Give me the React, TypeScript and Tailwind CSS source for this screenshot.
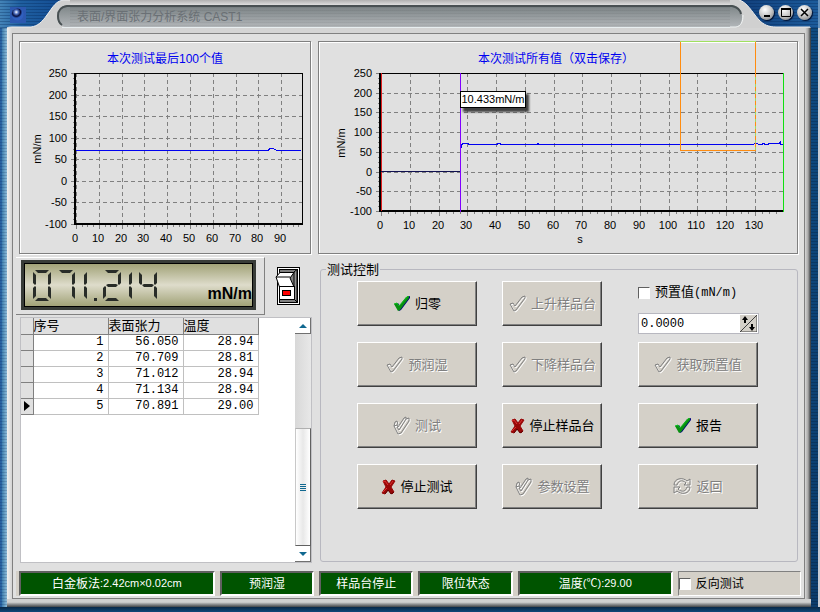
import { useState } from "react";
import type { ReactNode } from "react";
import clsx from "clsx";

const yLabels = [250, 200, 150, 100, 50, 0, -50, -100];

const rows = [
  { no: 1, tension: "56.050", temp: "28.94" },
  { no: 2, tension: "70.709", temp: "28.81" },
  { no: 3, tension: "71.012", temp: "28.94" },
  { no: 4, tension: "71.134", temp: "28.94" },
  { no: 5, tension: "70.891", temp: "29.00" },
];

// segments: a top, b right top, c right bottom, d bottom, e left bottom, f left top, g middle
const digits = [
  { x: 8, on: "abcdef" },
  { x: 32, on: "abc" },
  { x: 44, on: "bc" },
  { x: 78, on: "abdeg" },
  { x: 89, on: "bc" },
  { x: 114, on: "bcfg" },
];

const segments: Record<string, string> = {
  a: "M2 0H16L13 3H5Z",
  b: "M18 2V13L16 15L15 14V5Z",
  c: "M18 29V18L16 16L15 17V26Z",
  d: "M2 31H16L13 28H5Z",
  e: "M0 29V18L2 16L3 17V26Z",
  f: "M0 2V13L2 15L3 14V5Z",
  g: "M5 14H13L15 15L13 17H5L3 15Z",
};

type AxesProps = {
  left: number;
  right: number;
  top: number;
  bottom: number;
  stepX: number;
  count: number;
};

function Axes({ left, right, top, bottom, stepX, count }: AxesProps) {
  const zero = left + 1;
  const stepY = (bottom - top) / 7;
  const ticks = Array.from({ length: count }, (_, i) => i);
  const minorX = Array.from({ length: count * 4 }, (_, i) => Math.round(zero + (i * stepX) / 4)).filter((x) => x < right);
  const minorY = Array.from({ length: 28 }, (_, i) => Math.round(top + (i * stepY) / 4));
  return (
    <g>
      <g stroke="#808080" shapeRendering="crispEdges">
        {ticks.map((i) => (
          <line key={i} x1={Math.round(zero + i * stepX) + 0.5} x2={Math.round(zero + i * stepX) + 0.5} y1={top} y2={bottom} strokeDasharray="4 3" />
        ))}
        {yLabels.map((v, i) => (
          <line key={v} x1={left} x2={right} y1={Math.round(top + i * stepY) + 0.5} y2={Math.round(top + i * stepY) + 0.5} strokeDasharray="4 3" />
        ))}
        {minorX.map((x, i) => (
          <line key={i} x1={x + 0.5} x2={x + 0.5} y1={bottom} y2={bottom + (i % 4 ? 3 : 5)} />
        ))}
        {minorY.map((y, i) => (
          <line key={i} x1={left - (i % 4 ? 2 : 4)} x2={left} y1={y + 0.5} y2={y + 0.5} />
        ))}
        <line x1={left - 4} x2={left} y1={bottom + 0.5} y2={bottom + 0.5} />
      </g>
      <g fill="#000" shapeRendering="crispEdges">
        <rect x={left - 1} y={top} width="2" height={bottom - top} />
        <rect x={left - 1} y={bottom - 1} width={right - left + 2} height="2" />
        <rect x={left} y={top} width={right - left} height="1" />
      </g>
      <g fontSize="11" fill="#000">
        {yLabels.map((v, i) => (
          <text key={v} x={left - 8} y={Math.round(top + i * stepY) + 4} textAnchor="end">{v}</text>
        ))}
        {ticks.map((i) => (
          <text key={i} x={Math.round(zero + i * stepX) - 1} y={bottom + 18} textAnchor="middle">{i * 10}</text>
        ))}
      </g>
    </g>
  );
}

function Panel({ children }: { children: ReactNode }) {
  return (
    <div className="border border-[#808080] shadow-[inset_1px_1px_0_#fff,1px_1px_0_#fff]">{children}</div>
  );
}

function LastChart() {
  return (
    <Panel>
      <svg viewBox="0 0 290 211" className="block w-full" role="img" aria-label="本次测试最后100个值">
        <text x="145" y="21" fontSize="12" fill="#0000f0" textAnchor="middle">本次测试最后100个值</text>
        <text transform="translate(21 107) rotate(-90)" fontSize="11" textAnchor="middle">mN/m</text>
        <Axes left={55} right={282} top={31} bottom={182} stepX={22.8} count={10} />
        <rect x="282" y="31" width="1" height="152" fill="#000" />
        <polyline points="56,108.5 248,108.5 250,106.5 253,106.5 255,107.5 257,108.5 281,108.5" fill="none" stroke="#0000f0" shapeRendering="crispEdges" />
      </svg>
    </Panel>
  );
}

function AllChart() {
  return (
    <Panel>
      <svg viewBox="0 0 478 211" className="block w-full overflow-visible" role="img" aria-label="本次测试所有值">
        <text x="237" y="21" fontSize="12" fill="#0000f0" textAnchor="middle">本次测试所有值（双击保存）</text>
        <text transform="translate(26 101) rotate(-90)" fontSize="11" textAnchor="middle">mN/m</text>
        <text x="261" y="201" fontSize="11" textAnchor="middle">s</text>
        <Axes left={61} right={464} top={31} bottom={169} stepX={28.76} count={14} />
        <g fill="none" shapeRendering="crispEdges">
          <path d="M62.5 31V169" stroke="#e02020" />
          <path d="M464.5 31V170" stroke="#10e010" />
          <path d="M62 129.5H141" stroke="#101050" />
          <path d="M142.5 106V102.5H143V101.5H149V102.5H178V101.5H181V102.5H218V101.5H219V102.5H434L436 101.5H438L440 102.5H443V101.5H445V102.5H449V101.5H460L461 100.5V102.5H464" stroke="#0000f0" />
          <path d="M361.5 0V108.5H436.5" stroke="#ff8c10" />
          <path d="M436.5 0V31" stroke="#ff8c10" />
          <path d="M436.5 31V108" stroke="#a0d860" />
          <path d="M436.5 31V108" stroke="#ff8c10" strokeDasharray="4 3" />
          <path d="M361 -0.5H437" stroke="#a0e060" />
          <path d="M141.5 31V170" stroke="#8000ff" />
        </g>
        <rect x="144" y="52" width="66" height="18" fill="#404040" className="blur-[1px]" />
        <rect x="141.5" y="49.5" width="65" height="16" fill="#fff" stroke="#000" />
        <text x="174" y="61" fontSize="11" textAnchor="middle">10.433mN/m</text>
      </svg>
    </Panel>
  );
}

function TitleBar() {
  return (
    <header className="flex h-7 w-full bg-[#d0d0d0]">
      <svg width="70" height="28" viewBox="0 0 70 28" className="shrink-0" aria-hidden="true">
        <defs>
          <linearGradient id="blueL">
            <stop offset="0" stopColor="#4484b8" />
            <stop offset="0.3" stopColor="#1f5fa0" />
            <stop offset="1" stopColor="#104890" />
          </linearGradient>
          <linearGradient id="groove" x2="0" y2="1">
            <stop offset="0" stopColor="#7c8486" />
            <stop offset="1" stopColor="#b2b6b9" />
          </linearGradient>
          <pattern id="lines" width="4" height="3" patternUnits="userSpaceOnUse">
            <rect width="4" height="1" fill="#002050" fillOpacity="0.3" />
          </pattern>
          <radialGradient id="ball" cx="0.4" cy="0.3">
            <stop offset="0" stopColor="#fff" />
            <stop offset="0.35" stopColor="#5070c0" />
            <stop offset="0.7" stopColor="#081040" />
            <stop offset="1" stopColor="#3060c0" />
          </radialGradient>
        </defs>
        <rect width="70" height="28" fill="url(#blueL)" />
        <rect width="70" height="28" fill="url(#lines)" />
        <rect x="10" y="7" width="16" height="16" fill="#2c58b0" />
        <circle cx="17.500" cy="14.500" r="6" fill="url(#ball)" />
        <path d="M7 28Q8 27 12 27H31C38 26 42 22 47 15C53 7 56 0 65 0H70V28Z" fill="#d0d0d0" />
        <path d="M7 28Q8 27 12 27H31C38 26 42 22 47 15C53 7 56 0 65 0H70" fill="none" stroke="#f0f0f0" />
        <path d="M70 5H67C60 6 57 12 57 16C57 22 60 26 65 27H70Z" fill="url(#groove)" />
        <path d="M70 6H67C60 7 58 12 58 16C58 21 59 23 62 25" fill="none" stroke="#485052" strokeWidth="2" />
        <path d="M62 27H70" stroke="#e8eef0" transform="translate(0 0.500)" />
      </svg>
      <div className="flex min-w-0 flex-1 flex-col">
        <div className="h-[5px] bg-linear-to-b from-[#b0b0b0] to-[#dedede]" />
        <div className="flex h-[22px] items-center border-t-2 border-[#485052] bg-[repeating-linear-gradient(#0000000c_0_1px,transparent_1px_3px),linear-gradient(#7c8486,#b2b6b9)] pl-[7px]">
          <h1 className="text-xs text-[#6a7075]">表面/界面张力分析系统 CAST1</h1>
        </div>
        <div className="h-px bg-[#e8eef0]" />
      </div>
      <div className="relative h-7 w-[90px] shrink-0">
        <svg width="90" height="28" viewBox="0 0 90 28" className="absolute inset-0" aria-hidden="true">
          <defs>
            <linearGradient id="blueR">
              <stop offset="0" stopColor="#103c78" />
              <stop offset="1" stopColor="#1c5c9c" />
            </linearGradient>
          </defs>
          <rect width="90" height="28" fill="url(#blueR)" />
          <rect width="90" height="28" fill="url(#lines)" />
          <path d="M0 0H9C17 2 22 12 29 20C34 25 39 27 46 27H77Q81 27 81 28H0Z" fill="#d0d0d0" />
          <path d="M9 0C17 2 22 12 29 20C34 25 39 27 46 27H80" fill="none" stroke="#ececec" />
          <path d="M0 5H2C9 6 12 12 12 17C12 23 10 26 6 27H0Z" fill="url(#groove)" />
          <path d="M0 6H2C7 7 10 9 11 14" fill="none" stroke="#485052" strokeWidth="2" />
          <path d="M13 15C13 22 11 26 6 27H0" fill="none" stroke="#f0f4f4" />
          <rect x="88" width="2" height="28" fill="#6a96c0" />
        </svg>
        <div className="relative flex h-full justify-end gap-1 pt-[5px] pr-2">
          <WindowButton label="最小化"><path d="M5 11H11" /></WindowButton>
          <WindowButton label="最大化"><path d="M3 4H13M3.500 4V11.500H12.500V4" strokeWidth="1" /><path d="M3 4H13" /></WindowButton>
          <WindowButton label="关闭"><path d="M4 4L11 11M11 4L4 11" strokeWidth="1.500" /></WindowButton>
        </div>
      </div>
    </header>
  );
}

function WindowButton({ label, children }: { label: string; children: ReactNode }) {
  return (
    <button type="button" aria-label={label} className="size-[15px] rounded-full bg-[radial-gradient(circle_at_40%_30%,#fff,#c4c4c4_50%,#707070)] shadow-[1px_1px_1px_#001030]">
      <svg viewBox="0 0 15 15" className="size-[15px]" fill="none" stroke="#000" strokeWidth="2">{children}</svg>
    </button>
  );
}

type IconName = "check" | "double" | "cross" | "back";

const CHECK = "M1 9L4 8L6 11L13 2L16 1L16 3L7 15L5 16Z";

function Icon({ name, disabled }: { name: IconName; disabled?: boolean }) {
  if (name === "cross") {
    return (
      <svg width="15" height="16" viewBox="0 0 15 16" className="shrink-0">
        <path d="M2 2L5 1L8 5L11 1L14 2L10 8L13 13L11 15L7 11L4 15L1 14L5 8Z" fill="#980808" stroke="#980808" />
        <path d="M2 3L4 2L7 6M9 6L12 2M2 13L6 9" stroke="#e03030" fill="none" />
        <path d="M4 15L7 11L10 15L13 13" stroke="#600000" fill="none" />
      </svg>
    );
  }
  if (name === "back") {
    const arrows = "M1 8C1 1 10 0 14 4L17 2V8H11L13 6C9 2 5 4 4 8ZM17 10C17 17 8 18 4 14L1 16V10H7L5 12C9 16 13 14 14 10Z";
    return (
      <svg width="19" height="19" viewBox="0 0 19 19" className="shrink-0" fill="none">
        <path d={arrows} stroke="#fff" transform="translate(1 1)" />
        <path d={arrows} stroke="#808080" />
      </svg>
    );
  }
  if (!disabled) {
    return (
      <svg width="18" height="17" viewBox="0 0 18 17" className="shrink-0">
        <path d={CHECK} fill="#000080" transform="translate(1 0)" />
        <path d={CHECK} fill="#089010" />
        <path d="M1 9L4 8L6 11L15 1" fill="none" stroke="#10c020" />
      </svg>
    );
  }
  const outline = name === "double" ? "M1 10L4 9L5 11L11 2L13 1V3L16 2V5L8 17L5 18ZM1 10L2 6L4 5L5 9M13 3L6 14L4 11" : CHECK;
  return (
    <svg width="18" height={name === "double" ? 20 : 18} viewBox={name === "double" ? "0 0 18 20" : "0 0 18 18"} className="shrink-0" fill="none">
      <path d={outline} stroke="#fff" transform="translate(1 1)" />
      <path d={outline} stroke="#808080" />
    </svg>
  );
}

type ControlProps = { icon: IconName; text: string; disabled?: boolean; narrow?: boolean };

function Control({ icon, text, disabled, narrow }: ControlProps) {
  return (
    <button
      type="button"
      disabled={disabled}
      className={clsx(
        "flex h-[45px] items-center justify-center gap-1 border-t border-l border-r-[#404040] border-b-[#404040] border-t-white border-l-white border-r border-b bg-[#d4d0c8] text-[13px] shadow-[inset_-1px_-1px_0_#808080]",
        narrow ? "w-[100px]" : "w-[120px]",
        disabled ? "text-[#808080] [text-shadow:1px_1px_0_#fff]" : "text-black"
      )}
    >
      <Icon name={icon} disabled={disabled} />
      <span>{text}</span>
    </button>
  );
}

function Lcd() {
  return (
    <div className="flex h-[58px] w-[249px] border-t border-r border-b border-t-white border-r-[#808080] border-b-[#808080] py-0.5 pl-[5px]">
      <div className="flex h-[50px] w-[235px] border-[3px] border-[#383c38]">
        <div className="flex flex-1 items-end justify-between border border-black bg-linear-to-b from-[#a2a378] via-[#dedccb] to-[#a2a378]">
          <svg width="140" height="42" viewBox="0 0 140 42" role="img" aria-label="071.214">
            {digits.map((d) => (
              <g key={d.x} transform={`translate(${d.x} 6)`} fill="#282c28">
                {d.on.split("").map((s) => <path key={s} d={segments[s]} />)}
              </g>
            ))}
            <rect x="69" y="34" width="3" height="3" fill="#282c28" />
          </svg>
          <span className="pb-0.5 text-base leading-5 font-bold">mN/m</span>
        </div>
      </div>
    </div>
  );
}

function PowerSwitch() {
  return (
    <button type="button" aria-label="电源" className="h-10 w-[26px]">
      <svg width="26" height="40" viewBox="0 0 26 40">
        <rect x="2.500" y="1.500" width="22" height="37" fill="#fff" stroke="#000" />
        <rect x="4.500" y="3.500" width="18" height="33" fill="#808080" stroke="#000" />
        <path d="M19 6L22 3.500V36L19 33Z" fill="#909090" stroke="#000" />
        <path d="M5 6.500H19L15 12L19 21H4.500L1 11Z" fill="#fff" stroke="#000" />
        <path d="M1 11H15" fill="none" stroke="#000" />
        <rect x="4.500" y="20.500" width="15" height="13" fill="#fff" stroke="#000" />
        <rect x="7.500" y="24.500" width="8" height="5" fill="#f00" stroke="#000" />
      </svg>
    </button>
  );
}

function DataTable() {
  return (
    <div className="ml-1 mt-0.5 flex h-[246px] w-[292px] border border-[#c0c0c4] bg-white">
      <div className="flex-1">
        <table className="w-[237px] table-fixed border-collapse text-[13px] leading-[15px]">
          <colgroup>
            <col className="w-3" />
            <col className="w-[75px]" />
            <col className="w-[75px]" />
            <col className="w-[75px]" />
          </colgroup>
          <thead>
            <tr className="bg-[#e0e0e0]">
              <th className="h-4 border-r border-b border-[#808080] p-0" />
              <th className="h-4 border-r border-b border-[#808080] p-0 text-left font-normal">序号</th>
              <th className="h-4 border-r border-b border-[#808080] p-0 text-left font-normal">表面张力</th>
              <th className="h-4 border-r border-b border-[#808080] p-0 text-left font-normal">温度</th>
            </tr>
          </thead>
          <tbody className="font-['Liberation_Mono','Noto_Sans_CJK_SC',monospace] text-xs leading-[15px]">
            {rows.map((r) => (
              <tr key={r.no}>
                <td className="h-4 border-r border-b border-[#808080] bg-[#e0e0e0] p-0">
                  {r.no === 5 && (
                    <svg width="10" height="12" viewBox="0 0 10 12" className="block"><path d="M3 1V11L9 6Z" /></svg>
                  )}
                </td>
                <td className="h-4 border-r border-b border-[#c0c0c0] p-0 pr-1 text-right">{r.no}</td>
                <td className="h-4 border-r border-b border-[#c0c0c0] p-0 pr-1 text-right">{r.tension}</td>
                <td className="h-4 border-r border-b border-[#c0c0c0] p-0 pr-1 text-right">{r.temp}</td>
              </tr>
            ))}
          </tbody>
        </table>
      </div>
      <div className="flex w-4 flex-col bg-linear-to-r from-[#d8d8d8] to-[#e8e8e8]">
        <button type="button" aria-label="向上" className="flex h-4 items-center justify-center border-r border-b border-[#707070] bg-white">
          <svg width="8" height="4" viewBox="0 0 8 4"><path d="M0 4L4 0L8 4Z" fill="#106890" /></svg>
        </button>
        <div className="h-[94px]" />
        <div className="flex flex-1 flex-col items-center justify-center gap-px border-t border-r border-b border-l border-t-[#b0b0b0] border-r-[#606060] border-b-[#606060] border-l-[#c8c8c8] bg-linear-to-r from-white via-[#e8e8e8] to-white">
          <span className="h-px w-1.5 bg-[#106890]" />
          <span className="h-px w-1.5 bg-[#106890]" />
          <span className="h-px w-1.5 bg-[#106890]" />
          <span className="h-px w-1.5 bg-[#106890]" />
        </div>
        <button type="button" aria-label="向下" className="flex h-4 items-center justify-center border-r border-b border-[#707070] bg-white">
          <svg width="8" height="4" viewBox="0 0 8 4"><path d="M0 0L4 4L8 0Z" fill="#106890" /></svg>
        </button>
      </div>
    </div>
  );
}

const checkbox = "size-3 appearance-none border border-t-[#606060] border-l-[#606060] border-r-white border-b-white bg-white checked:bg-[#404040]";

function Preset() {
  const [value, setValue] = useState("0.0000");
  return (
    <div className="pt-1 font-['Liberation_Mono','Noto_Sans_CJK_SC',monospace]">
      <div className="flex h-4 items-center gap-[5px]">
        <input id="preset" type="checkbox" className={checkbox} />
        <label htmlFor="preset" className="text-xs leading-4 whitespace-nowrap"><span className="text-[13px]">预置值</span>(mN/m)</label>
      </div>
      <div className="mt-3 flex h-[21px] w-[121px] items-center border border-[#b8b8c0] bg-white pr-px">
        <input aria-label="预置值" value={value} onChange={(e) => setValue(e.target.value)} className="h-full min-w-0 flex-1 bg-white pl-0.5 text-xs outline-none" />
        <button type="button" aria-label="调整">
          <svg width="17" height="17" viewBox="0 0 17 17" className="block">
            <path d="M0 0H17V17H0Z" fill="#d4d0c8" />
            <path d="M0 17H17V0M0 17L17 0" fill="none" stroke="#404040" />
            <path d="M5 1L8 5H6V8H4V5H2Z" />
            <path d="M12 16L15 12H13V9H11V12H9Z" />
          </svg>
        </button>
      </div>
    </div>
  );
}

function Controls() {
  return (
    <fieldset className="mt-[5px] h-[300px] min-w-0 flex-1 rounded-[3px] border border-[#b8b8c0]">
      <legend className="ml-[5px] px-px text-[13px] leading-[15px]">测试控制</legend>
      <div className="grid auto-rows-[61px] grid-cols-[146fr_136fr_120fr] items-start pt-1 pr-[38px] pl-9">
        <Control icon="check" text="归零" />
        <Control icon="check" text="上升样品台" disabled narrow />
        <Preset />
        <Control icon="check" text="预润湿" disabled />
        <Control icon="check" text="下降样品台" disabled narrow />
        <Control icon="check" text="获取预置值" disabled />
        <Control icon="double" text="测试" disabled />
        <Control icon="cross" text="停止样品台" narrow />
        <Control icon="check" text="报告" />
        <Control icon="cross" text="停止测试" />
        <Control icon="double" text="参数设置" disabled narrow />
        <Control icon="back" text="返回" disabled />
      </div>
    </fieldset>
  );
}

function Status({ children }: { children: ReactNode }) {
  return (
    <div className="flex min-w-0 items-center justify-center border-2 border-t-[#606060] border-l-[#606060] border-r-white border-b-white bg-[#005400] text-xs whitespace-nowrap text-white">
      {children}
    </div>
  );
}

export default function App() {
  return (
    <div className="flex min-h-screen flex-col bg-[#0b3c6c] font-['Liberation_Sans','Noto_Sans_CJK_SC',sans-serif] text-black">
      <TitleBar />
      <div className="flex flex-1">
        <div className="w-[7px] bg-[repeating-linear-gradient(#00205030_0_1px,transparent_1px_3px),linear-gradient(to_right,#2860a0_20%,#4080b0_30%,#90bcd8)]" />
        <div className="flex min-w-0 flex-1 flex-col">
          <div className="flex flex-1">
            <div className="w-[5px] bg-linear-to-r from-[#f0f0f0] to-[#d4d4d4]" />
            <div className="flex min-w-0 flex-1 flex-col">
              <div className="h-[5px] bg-[#d4d4d4]" />
              <main className="flex-1 border border-[#808080] bg-[#e0e0e0] px-[3px] pt-[7px] pb-0.5">
                <div className="grid grid-cols-[292fr_480fr] gap-[7px] px-[3px]">
                  <LastChart />
                  <AllChart />
                </div>
                <div className="mt-[3px] flex gap-2 pr-[3px]">
                  <div className="w-[296px] shrink-0">
                    <div className="flex items-center gap-[10px]">
                      <Lcd />
                      <PowerSwitch />
                    </div>
                    <DataTable />
                  </div>
                  <Controls />
                </div>
                <footer className="mt-2 grid h-[25px] grid-cols-[197fr_95fr_95fr_95fr_156fr_124fr] gap-[5px] bg-[#d4d0c8] pl-[3px]">
                  <Status>白金板法<span className="text-[11px]">:2.42cm×0.02cm</span></Status>
                  <Status>预润湿</Status>
                  <Status>样品台停止</Status>
                  <Status>限位状态</Status>
                  <Status>温度<span className="text-[11px]">(℃):29.00</span></Status>
                  <div className="flex items-center gap-[5px] border border-t-[#808080] border-l-[#808080] border-r-white border-b-white">
                    <input id="reverse" type="checkbox" className={checkbox} />
                    <label htmlFor="reverse" className="text-xs whitespace-nowrap">反向测试</label>
                  </div>
                </footer>
              </main>
            </div>
            <div className="w-1.5 bg-linear-to-r from-[#d8d8d8] via-[#a8a8a8] to-[#303438]" />
          </div>
          <div className="h-2 bg-linear-to-b from-[#d0d0d0] from-40% to-[#404448]" />
        </div>
        <div className="w-[7px] bg-[repeating-linear-gradient(#00102040_0_1px,transparent_1px_3px),linear-gradient(#0e4a80,#0b3c6c)]" />
        <div className="w-0.5 bg-[#c8ccd4]" />
      </div>
      <div className="h-[5px] bg-linear-to-b from-[#082848] to-[#104878]" />
    </div>
  );
}
